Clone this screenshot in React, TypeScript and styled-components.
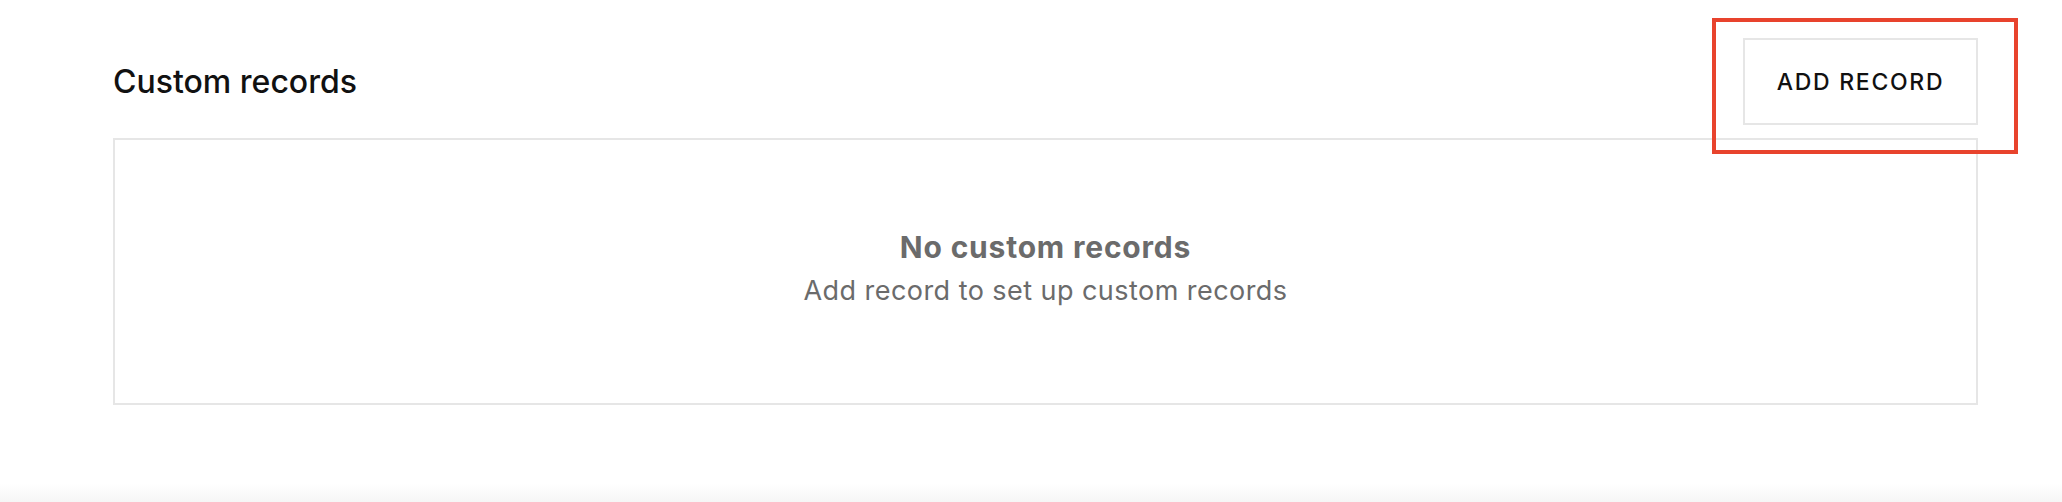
import React from "react";
import styled, { createGlobalStyle } from "styled-components";

const GlobalStyle = createGlobalStyle`
  html, body {
    margin: 0;
    padding: 0;
    background: #ffffff;
    font-family: Inter, "Noto Sans", "Liberation Sans", sans-serif;
  }
`;

const colors = {
  text: "#111111",
  muted: "#6b6b6b",
  border: "#e6e6e6",
  highlight: "#e8432d",
};

export default function App() {
  return (
    <>
      <GlobalStyle />
      <Page>
        <Section>
          <Header>
            <Title>Custom records</Title>
            <ButtonWrap>
              <AddButton type="button">ADD RECORD</AddButton>
              <Highlight />
            </ButtonWrap>
          </Header>
          <Empty>
            <EmptyTitle>No custom records</EmptyTitle>
            <EmptyText>Add record to set up custom records</EmptyText>
          </Empty>
        </Section>
        <BottomShade />
      </Page>
    </>
  );
}

const Page = styled.div`
  min-height: 100vh;
  display: flex;
  flex-direction: column;
  box-sizing: border-box;
`;

const Section = styled.section`
  padding: 38px 84px 0 113px;
  display: flex;
  flex-direction: column;
  gap: 13px;
`;

const Header = styled.div`
  display: flex;
  align-items: center;
  justify-content: space-between;
`;

const Title = styled.h2`
  margin: 0;
  font-size: 32px;
  font-weight: 500;
  color: ${colors.text};
  letter-spacing: 0;
`;

const ButtonWrap = styled.div`
  position: relative;
`;

const AddButton = styled.button`
  width: 235px;
  height: 87px;
  box-sizing: border-box;
  background: #fff;
  border: 2px solid ${colors.border};
  font-family: inherit;
  font-size: 23px;
  font-weight: 500;
  letter-spacing: 1.7px;
  color: ${colors.text};
  cursor: pointer;
`;

const Highlight = styled.div`
  position: absolute;
  left: -31px;
  right: -40px;
  top: -20px;
  bottom: -29px;
  border: 4px solid ${colors.highlight};
  pointer-events: none;
`;

const Empty = styled.div`
  height: 267px;
  box-sizing: border-box;
  padding-bottom: 5px;
  border: 2px solid ${colors.border};
  display: flex;
  flex-direction: column;
  align-items: center;
  justify-content: center;
  text-align: center;
`;

const EmptyTitle = styled.h3`
  margin: 0;
  font-size: 30px;
  line-height: 36px;
  font-weight: 700;
  letter-spacing: 0.8px;
  color: ${colors.muted};
`;

const EmptyText = styled.p`
  margin: 8px 0 0;
  font-size: 27px;
  line-height: 36px;
  font-weight: 400;
  letter-spacing: 0.45px;
  color: ${colors.muted};
`;

const BottomShade = styled.div`
  margin-top: auto;
  height: 18px;
  background: linear-gradient(to bottom, rgba(245, 245, 245, 0), #f6f6f6);
`;
